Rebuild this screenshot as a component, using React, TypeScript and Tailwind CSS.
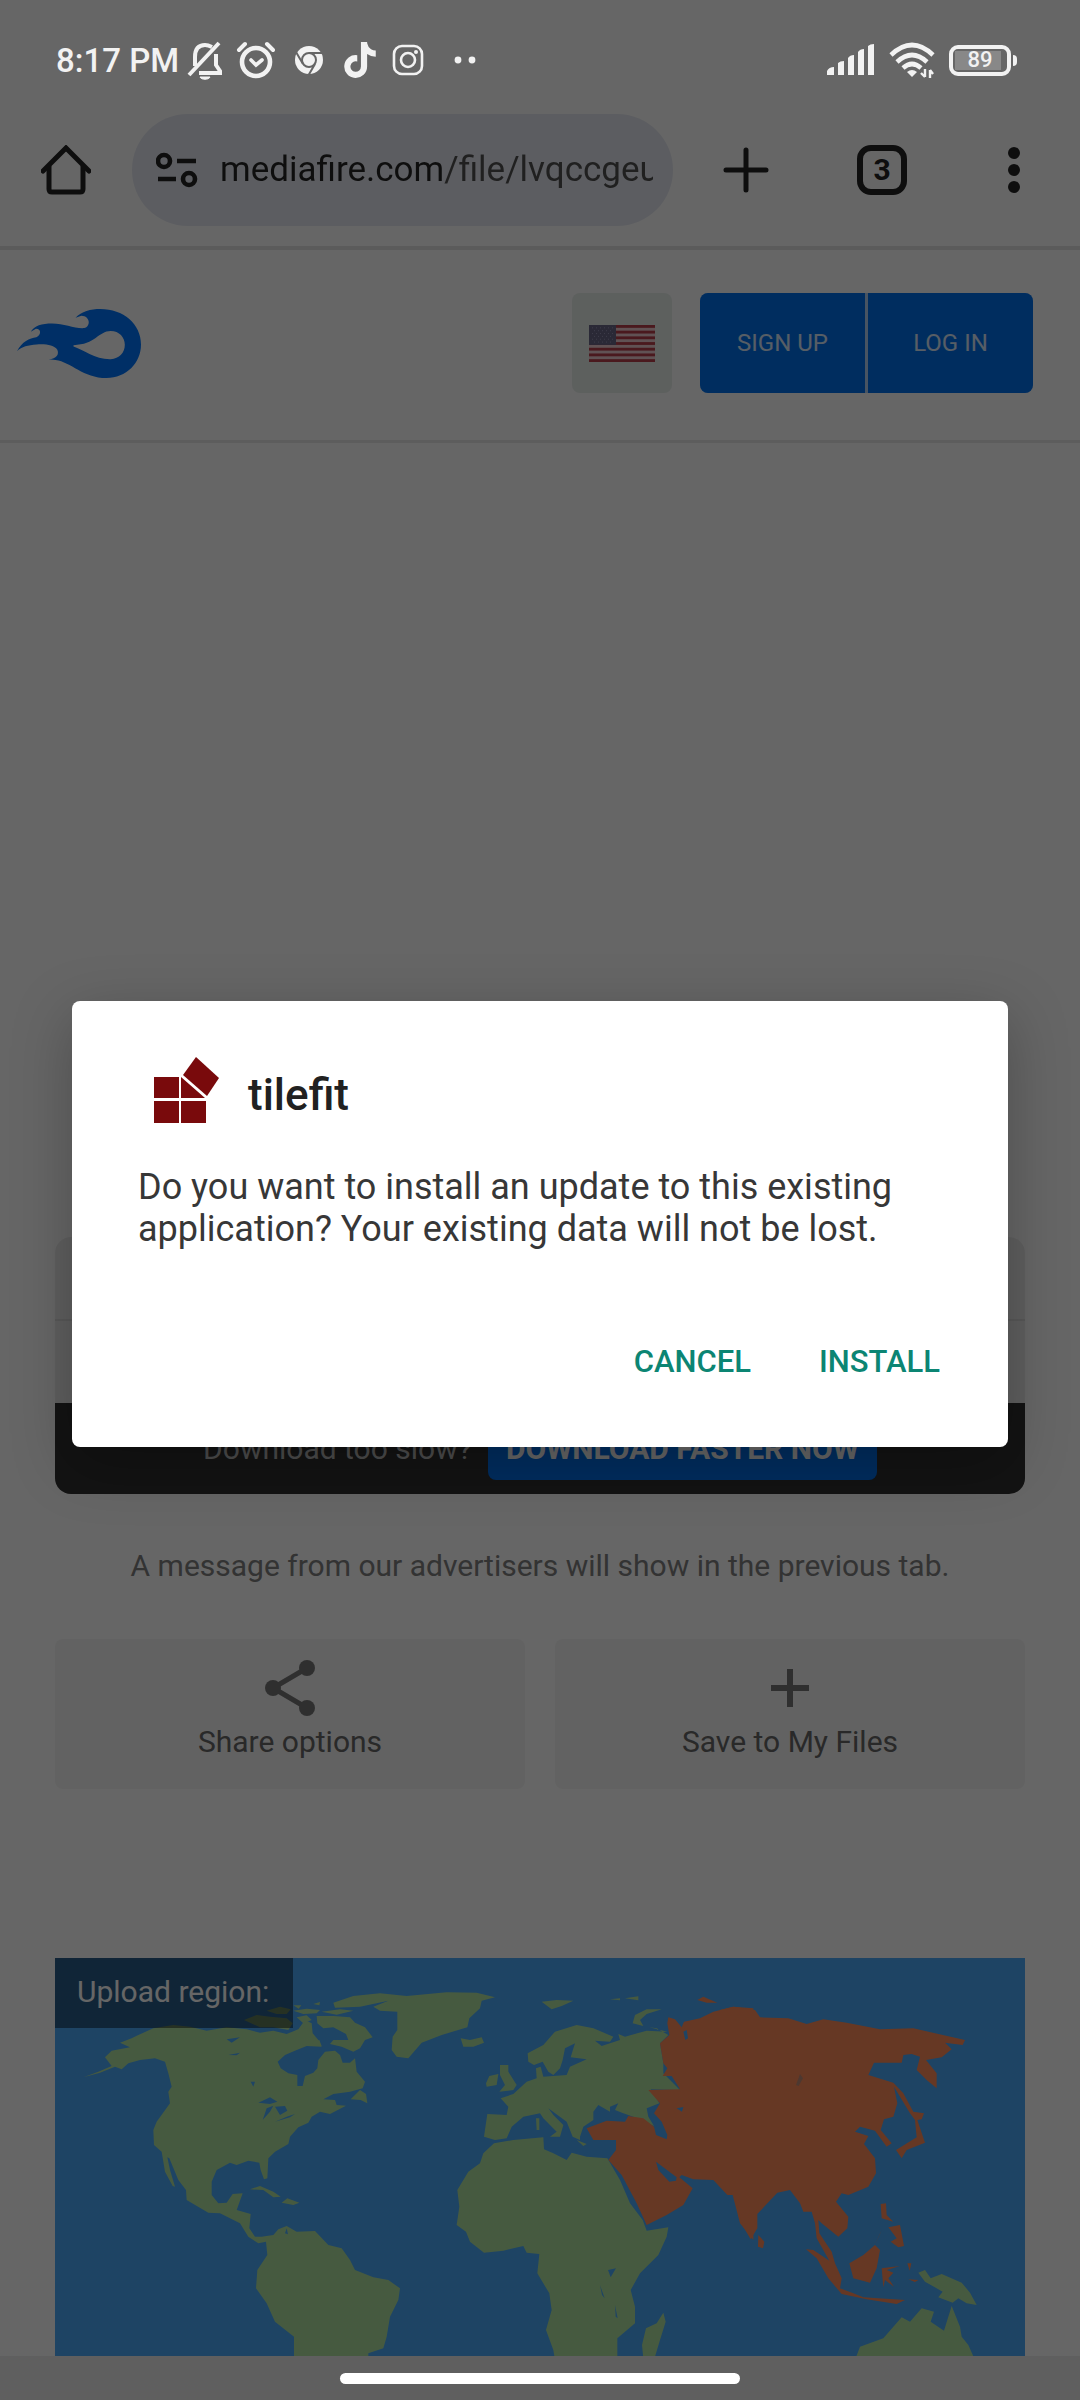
import React from "react";
import { FaTiktok } from "react-icons/fa6";

const BellOffIcon = () => (
  <svg viewBox="0 0 36 40" className="w-9 h-10 shrink-0" fill="none" stroke="currentColor" strokeWidth="4">
    <path d="M8 26V17C8 8 12 5 18 5c3 0 5 1 7 2" />
    <path d="M29 14v11l4 6v2H12" />
    <path d="M2 35 32 3" />
    <path d="M13 37h10c-1 3-9 3-10 0z" fill="currentColor" strokeWidth="1" />
  </svg>
);

const AlarmIcon = () => (
  <svg viewBox="0 0 40 40" className="w-10 h-10 shrink-0" fill="none" stroke="currentColor" strokeLinecap="round">
    <circle cx="20" cy="22" r="14" strokeWidth="4.6" />
    <path d="M3 10 9 4M37 10l-6-6" strokeWidth="4" />
    <path d="m15 20 5 5 6-5" strokeWidth="3.6" />
  </svg>
);

const ChromeIcon = () => (
  <svg viewBox="0 0 40 40" className="w-10 h-10 shrink-0">
    <circle cx="20" cy="20" r="14" fill="currentColor" />
    <g fill="none" stroke="#666" strokeWidth="2">
      <circle cx="20" cy="20" r="7" />
      <path d="M20 13h13M14 24 7 12M26 24l-7 12" />
    </g>
  </svg>
);

const InstagramIcon = () => (
  <svg viewBox="0 0 34 34" className="w-[34px] h-[34px] shrink-0" fill="none" stroke="currentColor">
    <rect x="3" y="3" width="28" height="28" rx="8" strokeWidth="2.6" />
    <circle cx="17" cy="17" r="7" strokeWidth="2.6" />
    <circle cx="25" cy="9" r="2" fill="currentColor" stroke="none" />
  </svg>
);

const MoreIcon = () => (
  <svg viewBox="0 0 40 40" className="w-10 h-10 shrink-0" fill="currentColor">
    <circle cx="20" cy="20" r="3.4" />
    <circle cx="34" cy="20" r="3.4" />
  </svg>
);

const SignalIcon = () => (
  <svg viewBox="0 0 48 32" className="w-12 h-8" fill="currentColor">
    <path d="M0 31v-4q2-4 7-4v8zM11 31V19q2-2 6-2v14zM21 31V14q2-3 6-3v20zM31 31V8q2-3 6-3v26zM41 31V2q2-2 6-2v31z" />
  </svg>
);

const WifiIcon = () => (
  <svg viewBox="0 0 46 36" className="w-[46px] h-9" fill="none" stroke="currentColor" strokeWidth="4.6">
    <path d="M2 13q21-20 42 0M8 20q15-14 30 0M14 26q9-8 18 0" />
    <path d="m18 30 5 5 5-5q-5-4-10 0z" fill="currentColor" stroke="none" />
    <path d="M36 27v8M32 31l4 4M41 36v-8M41 28l3 4" strokeWidth="2.4" />
  </svg>
);

const HomeIcon = () => (
  <svg viewBox="0 0 50 50" className="w-[50px] h-[50px]" fill="none" stroke="currentColor" strokeWidth="5">
    <path d="M2 26 25 3l23 23" strokeLinecap="round" />
    <path d="M8 21v23q0 3 3 3h28q3 0 3-3V21" />
  </svg>
);

const TuneIcon = () => (
  <svg viewBox="0 0 42 36" className="w-[42px] h-9 shrink-0" fill="none" stroke="currentColor" strokeWidth="4.6">
    <circle cx="8" cy="9" r="6" />
    <circle cx="33" cy="27" r="6" />
    <path d="M21 9h19M2 27h18" />
  </svg>
);

const FlameLogo = () => (
  <svg viewBox="48 177 360 206" preserveAspectRatio="none" className="w-[124px] h-[69px]" fill="#0077ff">
    <path
      fillRule="evenodd"
      d="M48 303C62 274 85 264 104 261 119 255 119 236 103 236L88 245C98 226 120 220 150 220 185 220 215 236 243 234 263 229 261 198 235 197L218 203C235 184 262 177 290 177 357 177 408 222 408 283 408 338 365 383 308 383 240 383 205 335 160 329L140 327C163 327 171 312 165 299 156 284 130 281 105 283 80 285 62 289 48 303zM212 289C240 298 275 328 320 327 345 325 361 308 361 284 361 262 345 243 320 243 285 243 275 284 212 285z"
    />
  </svg>
);

const FlagIcon = () => (
  <svg viewBox="0 0 66 39" preserveAspectRatio="none" className="w-[66px] h-[37px]">
    <rect width="66" height="39" fill="#efcdd1" />
    {Array(7)
      .fill(0)
      .map((_, index) => (
        <rect key={index} y={index * 6} width="66" height="3" fill="#b8404c" />
      ))}
    <rect width="27" height="21" fill="#6a6688" />
    <path
      d="M3 3h22M5 6h20M3 9h22M5 12h20M3 15h22M5 18h20"
      stroke="#9a98b8"
      strokeWidth="1"
      strokeDasharray="1 3"
    />
  </svg>
);

const ShareIcon = () => (
  <svg viewBox="0 0 50 56" className="w-[50px] h-14" fill="#777777">
    <path d="M42 8 8 28l34 20" fill="none" stroke="#777777" strokeWidth="5" />
    <circle cx="42" cy="8" r="8" />
    <circle cx="8" cy="28" r="8" />
    <circle cx="42" cy="48" r="8" />
  </svg>
);

const PlusIcon = () => (
  <svg viewBox="0 0 56 56" className="w-14 h-14" fill="none" stroke="#777777" strokeWidth="6">
    <path d="M28 9v38M9 28h38" />
  </svg>
);

const TilefitIcon = () => (
  <svg viewBox="0 0 66 66" className="w-[66px] h-[66px]" fill="#790a0c">
    <path d="M0 20h25v21H0zM0 44h25v22H0zM27 44h25v22H27zM27 20l24 21H27z" />
    <path d="M42 0 65 21 53 39 29 18z" />
  </svg>
);

// Three slices of the world, each with its own origin
const WorldMap = () => (
  <svg viewBox="0 0 2910 1194" className="block w-full h-auto bg-[#4baafa]" role="img" aria-label="World map">
    <g transform="translate(-45 -54)" fill="#b0e1a0">
      <path d="M295 285L340 265 400 255 450 260 500 272 560 262 620 268 660 278 700 272 740 282 775 268 795 240 815 250 818 280 835 300 845 320 800 318 770 330 735 345 713 365 722 385 745 400 772 405 772 438 788 438 795 408 820 398 832 385 835 360 855 335 885 332 900 345 908 368 930 368 945 355 950 395 975 425 968 445 930 455 880 462 850 478 885 480 890 495 918 497 870 522 840 515 815 530 805 548 775 562 750 590 745 612 705 635 685 655 682 715 672 718 662 690 658 668 625 662 590 675 570 668 530 690 515 725 515 765 535 790 560 788 578 762 608 760 590 810 632 822 628 865 645 890 665 890 700 885 715 868 740 858 770 875 825 873 865 915 905 925 930 960 945 990 1000 1012 1045 1020 1080 1045 1075 1080 1050 1130 1040 1190 1030 1225 985 1240 985 1260 762 1260 762 1190 705 1145 680 1090 648 1045 652 990 682 945 678 905 655 910 625 890 600 850 540 820 505 818 440 780 438 750 415 720 388 655 382 652 390 690 405 740 398 738 375 695 365 635 342 615 340 570 350 545 390 490 385 455 395 440 385 400 375 365 345 355 300 360 265 370 245 388 225 380 180 398 130 412 175 395 215 378 195 352 215 332 270 322 240 308 275 295z" />
      <path d="M612 240L650 225 690 230 740 235 758 250 745 270 700 262 660 262zM680 212L720 200 752 208 740 222 710 222zM760 212L800 206 840 210 830 220 790 222zM760 196h24l-8 10zM820 192L840 186 838 196zM770 232L800 226 815 240 790 250zM845 215L900 208 940 212 890 224zM830 228L880 228 930 232 945 248 975 262 998 292 975 300 960 325 940 335 905 320 870 312 880 300 925 300 918 282 880 262 850 265 832 250z" />
      <path d="M932 478L960 450 978 462 982 490 962 480zM630 748L660 738 700 755 722 770 700 772 670 750zM725 788L742 775 778 788 760 795zM812 308L838 300 845 318z" />
      <g fill="#4baafa">
        <path d="M560 298L600 292 575 308zM565 345L600 338 590 346zM632 425L645 425 640 440zM655 488L690 472 712 485 690 492zM668 540L680 505 700 497 690 515zM705 500L735 498 742 512 720 525zM705 545L740 530 765 522 750 532zM735 880l5-15 4 18z" />
      </g>
    </g>
    <g transform="translate(975 -54)" fill="#b0e1a0">
      <path d="M-140 188L-80 168 0 160 80 168 200 157 290 158 345 172 305 182 300 205 268 235 262 262 185 285 125 308 85 355 50 350 35 330 38 290 52 270 52 215 0 212-20 200 25 182-60 200-135 203z" />
      <path d="M242 295L270 300 305 292 312 308 280 320 250 320zM485 185L530 180 580 182 545 198 515 208zM690 178l30-3v6zM735 175l40-6v12zM845 208L800 208 765 225 758 250 790 258 780 240 800 222z" />
      <path d="M360 375L385 375 385 395 410 435 400 450 358 455 375 435 360 405zM318 430L328 408 355 402 350 435 320 440z" />
      <path d="M322 522L380 525 385 500 362 475 400 462 440 425 470 415 468 385 482 380 490 410 560 405 570 380 620 358 572 352 585 310 555 325 548 360 540 385 520 405 505 395 488 365 462 375 445 365 443 340 490 315 525 275 590 255 640 265 700 290 690 305 645 302 665 318 720 300 715 282 735 290 800 272 862 275 808 262 830 265 865 285 840 310 850 370 850 400 900 450 812 448 838 490 800 505 805 530 822 558 760 530 730 520 705 510 715 490 690 500 690 515 655 495 640 515 640 540 610 560 600 590 600 600 578 590 560 545 505 505 520 525 550 555 540 590 510 590 530 575 490 535 480 520 430 530 395 560 380 595 345 600 312 590z" />
      <path d="M468 535h10v35h-8zM590 600l30 12-10 6z" />
      <path d="M342 610L400 600 490 592 492 628 520 640 560 660 575 638 620 650 682 655 720 720 750 790 788 840 800 872 865 862 860 890 835 945 780 1000 752 1050 765 1100 765 1150 712 1195 712 1260 525 1260 520 1230 498 1170 515 1110 508 1060 472 1000 478 942 440 938 430 918 370 932 312 938 270 905 258 875 230 855 238 800 232 750 265 695 300 670 310 640z" />
      <path d="M850 1118L857 1145 840 1200 825 1250 790 1255 786 1215 798 1165 830 1150z" />
      <g fill="#ff8c5a">
        <path d="M865 232L885 238 905 262 912 245 960 235 1000 215 1060 200 1120 205 1120 900 1080 850 1058 765 1042 765 1000 720 940 718 905 705 898 712 938 745 910 795 860 825 800 855 770 790 725 705 685 660 708 630 708 600 640 600 620 565 680 542 735 545 745 528 790 535 822 560 828 585 860 598 862 585 845 545 822 520 840 490 805 450 900 448 875 408 848 408 862 385 850 370 840 310 868 285 862 250z" />
        <path d="M952 180L970 170 1012 188 980 188z" />
      </g>
      <g fill="#4baafa">
        <path d="M828 665L850 682 890 712 888 722 868 725 835 690zM684 990L708 985 692 1012zM660 1035l14 40-8-10zM705 1095l8 40-6-5zM890 505l20-4-4 14zM910 275l10-5 4 25-8 5z" />
      </g>
    </g>
    <g transform="translate(1995 -54)" fill="#ff8c5a">
      <path d="M0 210L40 200 105 210 120 232 205 235 260 252 310 238 380 248 480 268 580 265 735 300 728 315 675 308 695 328 665 352 618 360 650 400 650 445 620 420 590 390 600 350 575 342 550 345 545 368 462 368 445 405 520 428 550 460 580 515 612 520 605 538 592 540 615 608 560 630 545 655 528 630 590 592 585 540 570 520 522 440 532 490 520 530 492 538 482 570 515 610 500 620 465 572 420 560 405 575 445 588 432 612 465 655 468 700 445 740 385 765 365 760 348 785 385 830 382 865 355 890 305 850 295 840 298 880 335 935 345 970 365 1015 360 1045 400 1060 430 1072 555 1080 530 1092 440 1078 365 1062 325 1015 290 955 258 928 280 930 328 962 290 895 285 850 275 815 250 815 240 790 210 750 172 758 112 822 112 865 92 898 70 860 40 765 0 740z" />
      <path d="M115 885l18 20-4 20-15-5zM388 970L430 945 465 915 480 930 470 985 450 1028 400 1015zM485 985L540 978 500 990 520 998 505 1015 522 1040 495 1020 490 1042zM482 792L498 790 500 825 520 845 485 835zM505 862L540 855 552 918 535 922 512 905 530 895zM485 870L465 912 480 882zM562 970l12 0-5 22zM565 1018l30 2-10 6z" />
      <path d="M228 435L240 402 249 415 236 438z" fill="#c08c78" />
      <g fill="#b0e1a0">
        <path d="M595 998L615 990 632 1015 665 1002 725 1028 750 1058 770 1095 740 1090 715 1075 698 1088 655 1072 668 1055 615 1025zM405 1260L420 1220 490 1195 545 1132 570 1145 605 1105 642 1115 632 1145 672 1172 695 1098 720 1160 725 1190 745 1215 765 1260z" />
      </g>
    </g>
  </svg>
);

const StatusBar = () => (
  <div className="relative z-20 flex h-[86px] items-center justify-between pt-[34px] pl-14 pr-[63px] text-[#f2f2f2]">
    <div className="flex items-center">
      <span className="text-[33px] leading-none font-medium">8:17 PM</span>
      <div className="ml-2 flex items-center gap-[13px]">
        <BellOffIcon />
        <AlarmIcon />
        <ChromeIcon />
        <FaTiktok className="w-9 h-9 shrink-0" />
        <InstagramIcon />
        <MoreIcon />
      </div>
    </div>
    <div className="flex items-center gap-[14px]">
      <SignalIcon />
      <WifiIcon />
      <div className="flex items-center gap-[2px]">
        <div className="flex h-[31px] w-[62px] items-center rounded-[9px] border-4 border-[#f2f2f2] p-[2px]">
          <div className="flex h-full w-[46px] items-center justify-center bg-[#888888] pl-[4px] text-[22px] leading-none font-medium">
            89
          </div>
        </div>
        <div className="h-[11px] w-1 rounded-r-sm bg-[#f2f2f2]"></div>
      </div>
    </div>
  </div>
);

const Toolbar = () => (
  <div className="flex items-center border-b-4 border-[#e4e4e4] pt-7 pb-5 pl-[41px] pr-[59px] text-[#242424]">
    <button aria-label="Home">
      <HomeIcon />
    </button>
    <div className="ml-[41px] flex h-28 flex-1 items-center rounded-full bg-[#e6e9f2] pl-6 pr-5">
      <TuneIcon />
      <input
        aria-label="Address"
        readOnly
        value="mediafire.com/file/lvqccgeu"
        className="ml-[22px] w-0 min-w-0 flex-1 bg-[linear-gradient(90deg,#242424_52%,#505050_52%)] bg-clip-text text-[35px] text-transparent outline-none"
      />
    </div>
    <button aria-label="New tab" className="ml-[50px]">
      <svg viewBox="0 0 46 46" className="w-[46px] h-[46px]" fill="none" stroke="currentColor" strokeWidth="5" strokeLinecap="round">
        <path d="M23 3v40M3 23h40" />
      </svg>
    </button>
    <button aria-label="Tabs" className="ml-[88px] h-[50px] w-[50px] rounded-[14px] border-[6px] border-current text-[30px] leading-none font-bold">
      3
    </button>
    <button aria-label="Menu" className="ml-[100px]">
      <svg viewBox="0 0 14 48" className="w-[14px] h-12" fill="currentColor">
        <circle cx="7" cy="7" r="6" />
        <circle cx="7" cy="24" r="6" />
        <circle cx="7" cy="41" r="6" />
      </svg>
    </button>
  </div>
);

const SiteHeader = () => (
  <header className="flex h-[193px] items-center border-b-[3px] border-[#e8e8e8] pb-1 pl-[17px] pr-[47px]">
    <a href="#" aria-label="MediaFire" className="mr-auto">
      <FlameLogo />
    </a>
    <button aria-label="Language" className="mr-7 flex h-[100px] w-[100px] items-center justify-center rounded-lg bg-[#e9efec]">
      <FlagIcon />
    </button>
    <div className="flex h-[100px] gap-[3px] overflow-hidden rounded-lg bg-[#b5d3f5] text-2xl text-white/85">
      <a href="#" className="flex w-[165px] items-center justify-center bg-[#0070ee]">SIGN UP</a>
      <a href="#" className="flex w-[165px] items-center justify-center bg-[#0070ee]">LOG IN</a>
    </div>
  </header>
);

const InstallDialog = () => (
  <div className="absolute inset-0 z-10 flex items-center justify-center bg-black/60 px-[72px] pt-12">
    <div role="dialog" aria-labelledby="dialog-title" className="w-full rounded-lg bg-white pt-14 pr-[52px] pb-[50px] pl-[66px] shadow-[0_16px_60px_rgba(0,0,0,0.25)]">
      <div className="flex items-center pl-4">
        <TilefitIcon />
        <h1 id="dialog-title" className="ml-7 pt-[10px] text-[44px] leading-none font-medium text-[#212121]">
          tilefit
        </h1>
      </div>
      <p className="mt-[43px] text-[36px] leading-[42px] text-[#373737]">
        Do you want to install an update to this existing application? Your existing data will not be lost.
      </p>
      <div className="mt-[77px] flex justify-end gap-9 text-[31px] leading-[70px] font-medium text-[#0c8573]">
        <button className="px-4">CANCEL</button>
        <button className="px-4">INSTALL</button>
      </div>
    </div>
  </div>
);

const App: React.FC = () => {
  return (
    <div className="relative flex min-h-screen flex-col bg-white font-[Roboto,sans-serif]">
      <StatusBar />
      <Toolbar />
      <SiteHeader />

      <main className="px-[55px] pt-[794px] text-[30px] leading-10">
        <div className="overflow-hidden rounded-2xl bg-[#eeeeee]">
          <div className="h-[84px] border-b-2 border-[#dddddd]"></div>
          <div className="h-[82px]"></div>
          <div className="flex h-[91px] items-center justify-center bg-[#303030] text-[#bdbdbd]">
            <span>Download too slow?</span>
            <a href="#" className="ml-4 rounded-lg bg-[#0070ee] px-[18px] py-[11px] font-bold text-white">
              DOWNLOAD FASTER NOW
            </a>
          </div>
        </div>

        <p className="mt-[52px] text-center text-[#808080]">
          A message from our advertisers will show in the previous tab.
        </p>

        <div className="mt-[53px] grid grid-cols-2 gap-[30px] text-[#666666]">
          <button className="flex h-[150px] flex-col items-center rounded-lg bg-[#f5f5f5] pt-[21px]">
            <ShareIcon />
            <span className="mt-[6px]">Share options</span>
          </button>
          <button className="flex h-[150px] flex-col items-center rounded-lg bg-[#f5f5f5] pt-[21px]">
            <PlusIcon />
            <span className="mt-[6px]">Save to My Files</span>
          </button>
        </div>

        <div className="relative mt-[169px]">
          <WorldMap />
          <div className="absolute top-0 left-0 bg-black/45 pt-[14px] pr-6 pb-4 pl-[22px] text-white">
            Upload region:
          </div>
        </div>
      </main>

      <div className="flex h-11 items-center justify-center bg-[#eeeeee]">
        <div className="relative z-20 h-[11px] w-[400px] rounded-full bg-white"></div>
      </div>

      <InstallDialog />
    </div>
  );
};

export default App;
